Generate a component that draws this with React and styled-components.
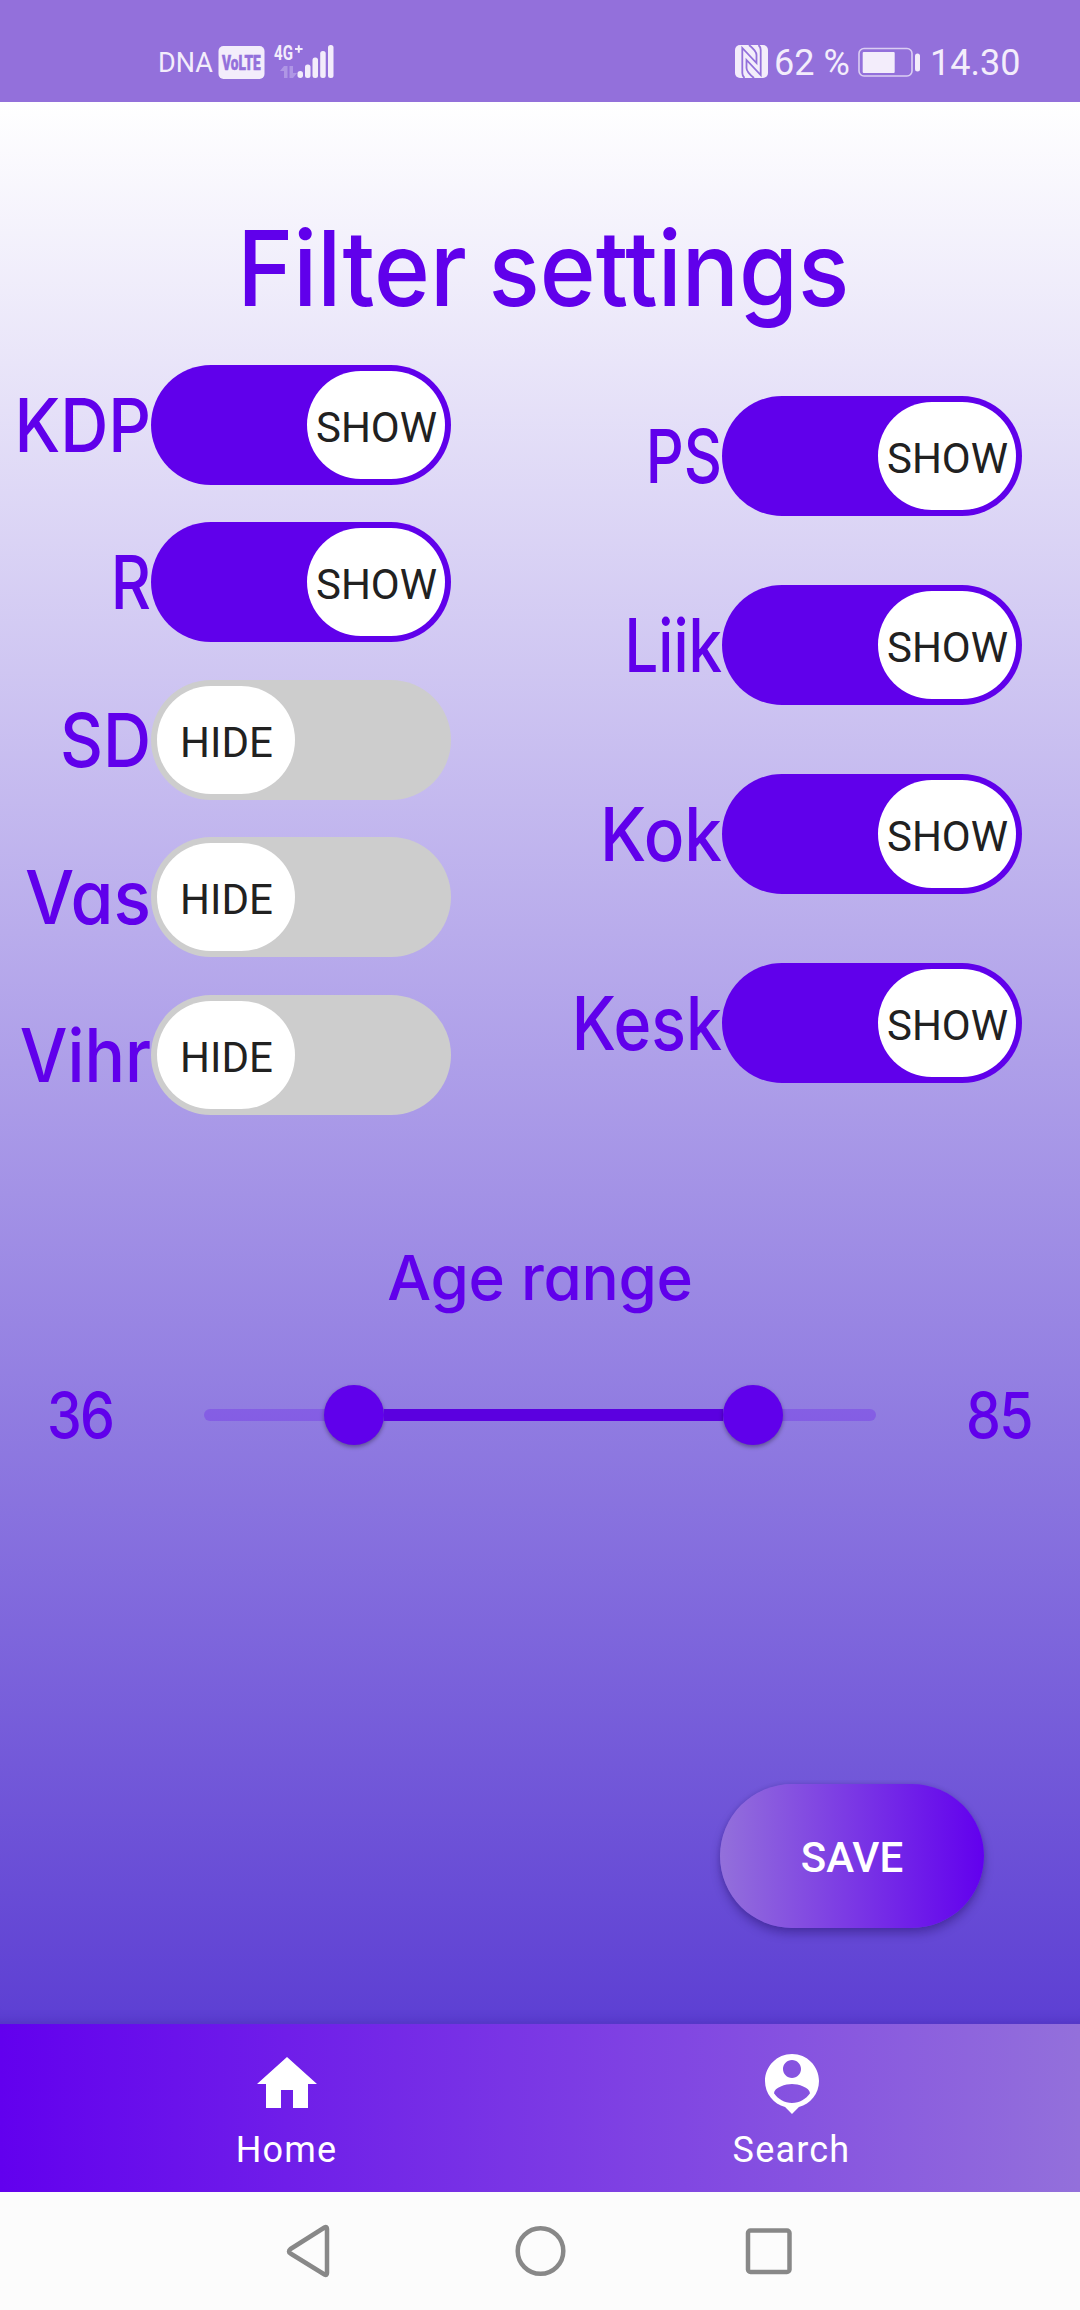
import React from 'react';
import styled, { createGlobalStyle } from 'styled-components';

const GlobalStyle = createGlobalStyle`
  * { box-sizing: border-box; }
  body { margin: 0; background: #fcfcfc; }
  button { border: 0; padding: 0; margin: 0; font: inherit; }
`;

const purple = '#6000eb';
const statusInk = '#f3edfb';

const Screen = styled.div`
  width: 1080px;
  height: 2310px;
  display: flex;
  flex-direction: column;
  overflow: hidden;
  font-family: Roboto, sans-serif;
`;

const StatusBar = styled.header`
  height: 102px;
  flex: none;
  display: flex;
  justify-content: space-between;
  padding: 45px 60px 0 158px;
  background: #9370db;
  color: ${statusInk};
`;

const StatusGroup = styled.div`
  display: flex;
  align-items: flex-start;
  height: 36px;
`;

const StatusText = styled.span`
  font-size: ${(p) => p.$size}px;
  line-height: 36px;
  white-space: nowrap;
  width: ${(p) => p.$width}px;
  margin-left: ${(p) => p.$gap || 0}px;
`;

const StatusSvg = styled.svg`
  display: block;
  flex: none;
  overflow: visible;
  margin-left: ${(p) => p.$gap || 0}px;
  margin-top: ${(p) => p.$drop || 0}px;
`;

const Content = styled.main`
  height: 1922px;
  flex: none;
  display: flex;
  flex-direction: column;
  background: linear-gradient(#ffffff, #5d3fd3);
  box-shadow: inset 0 -14px 12px -12px rgba(40, 20, 140, 0.25);
  color: ${purple};
  font-family: Inter, sans-serif;
  font-weight: 500;
  font-feature-settings: 'cv11' 1, 'calt' 0;
`;

const Title = styled.h1`
  margin: 101px 0 0;
  height: 130px;
  padding-left: 7px;
  text-align: center;
  font-size: 104px;
  font-weight: 500;
  line-height: 130px;
  word-spacing: -4px;
  white-space: nowrap;
  transform: scaleX(0.915);
`;

const Filters = styled.section`
  display: flex;
  justify-content: space-between;
  padding: 32px 58px 0 0;
  height: 782px;
`;

const FilterColumn = styled.div`
  display: flex;
  flex-direction: column;
  gap: ${(p) => p.$gap}px;
  padding-top: ${(p) => p.$top}px;
`;

const FilterRow = styled.label`
  display: flex;
  align-items: center;
  height: 120px;
`;

const FilterName = styled.span`
  width: ${(p) => p.$width}px;
  display: flex;
  justify-content: flex-end;
  font-size: 74px;
  line-height: 100px;
  white-space: nowrap;
  transform: scaleX(${(p) => p.$stretch});
  transform-origin: right center;
`;

const Toggle = styled.span`
  width: 300px;
  height: 120px;
  flex: none;
  display: flex;
  justify-content: ${(p) => (p.$on ? 'flex-end' : 'flex-start')};
  padding: 6px;
  border-radius: 60px;
  background: ${(p) => (p.$on ? purple : '#cdcdcd')};
`;

const Knob = styled.span`
  width: 138px;
  height: 108px;
  padding-left: 1px;
  border-radius: 54px;
  background: #fff;
  color: #212121;
  font-family: Roboto, sans-serif;
  font-size: 42px;
  font-weight: 400;
  line-height: 113px;
  text-align: center;
  white-space: nowrap;
`;

const AgeTitle = styled.h2`
  margin: 123px 0 0;
  height: 80px;
  text-align: center;
  font-size: 62px;
  font-weight: 500;
  line-height: 80px;
  letter-spacing: -0.3px;
`;

const AgeRow = styled.section`
  display: flex;
  align-items: center;
  justify-content: space-between;
  height: 80px;
  margin-top: 57px;
  padding: 0 47px;
`;

const AgeValue = styled.span`
  width: 67px;
  font-size: 63px;
  line-height: 80px;
  letter-spacing: -2px;
  white-space: nowrap;
  transform: scaleX(0.88);
  transform-origin: left center;
`;

const Track = styled.div`
  width: 672px;
  height: 12px;
  display: flex;
  align-items: center;
  border-radius: 6px;
  background: rgba(98, 0, 238, 0.24);
`;

const Thumb = styled.span`
  width: 60px;
  height: 60px;
  flex: none;
  border-radius: 50%;
  background: ${purple};
  box-shadow: 0 2px 4px rgba(0, 0, 0, 0.35);
`;

const Range = styled.span`
  height: 12px;
  background: #5b00e0;
`;

const SaveButton = styled.button`
  width: 264px;
  height: 144px;
  align-self: flex-end;
  margin: 329px 96px 0 0;
  border-radius: 72px;
  background: linear-gradient(90deg, #9370db, #6200ee);
  box-shadow: 0 6px 10px rgba(30, 10, 90, 0.35), 0 0 4px rgba(30, 10, 90, 0.15);
  color: #fff;
  font-family: Roboto, sans-serif;
  font-size: 42px;
  font-weight: 500;
  line-height: 148px;
  text-align: center;
`;

const TabBar = styled.nav`
  height: 168px;
  flex: none;
  display: flex;
  padding: 24px 36px 0 34px;
  background: linear-gradient(90deg, #6200ee, #9370db);
`;

const Tab = styled.div`
  flex: 1;
  display: flex;
  flex-direction: column;
  align-items: center;
  color: #fff;
  font-size: 36px;
  line-height: 42px;
  letter-spacing: 1.2px;
  gap: 9px;
`;

const SystemNav = styled.footer`
  height: 118px;
  flex: none;
  display: flex;
  align-items: flex-start;
  justify-content: space-between;
  padding: 30px 284px 0 279px;
  background: #fcfcfc;
`;

const leftParties = [
  { name: 'KDP', on: true, stretch: 0.9 },
  { name: 'R', on: true, stretch: 0.84 },
  { name: 'SD', on: false, stretch: 0.9 },
  { name: 'Vas', on: false, stretch: 0.94 },
  { name: 'Vihr', on: false, stretch: 0.91 },
];

const rightParties = [
  { name: 'PS', on: true, stretch: 0.8 },
  { name: 'Liik', on: true, stretch: 0.81 },
  { name: 'Kok', on: true, stretch: 0.91 },
  { name: 'Kesk', on: true, stretch: 0.87 },
];

const Party = ({ party, width }) => (
  <FilterRow>
    <FilterName $width={width} $stretch={party.stretch}>{party.name}</FilterName>
    <Toggle $on={party.on}>
      <Knob>{party.on ? 'SHOW' : 'HIDE'}</Knob>
    </Toggle>
  </FilterRow>
);

const Signal = () => (
  <StatusSvg $gap={5} width="116" height="34" viewBox="218 45 116 34" fill={statusInk}>
    <rect x="218.500" y="46" width="46" height="33" rx="5" />
    <text transform="translate(222 70) scale(.65 1)" fontFamily="Roboto" fontWeight="900" fontSize="21" stroke="#9370db" strokeWidth=".6" fill="#9370db">VoLTE</text>
    <text transform="translate(274 60) scale(.72 1)" fontFamily="Roboto" fontWeight="700" fontSize="21">4G</text>
    <path d="M295 48h2.800v-2.800h2V48h2.800v2h-2.800v2.800h-2V50H295z" />
    <path opacity=".3" d="M284 66h3.500v12h-3.500v-7h-4zM289.500 66h3.500v7h4l-4 5h-3.500z" />
    <rect x="297.500" y="71" width="5.500" height="7" rx="2.700" />
    <rect x="305" y="64.500" width="5.500" height="13.500" rx="2.500" />
    <rect x="312.500" y="57.500" width="5.500" height="20.500" rx="2.500" />
    <rect x="320.200" y="51" width="5.500" height="27" rx="2.500" />
    <rect x="328" y="45" width="5.500" height="33" rx="2.500" />
  </StatusSvg>
);

const Nfc = () => (
  <StatusSvg width="33" height="33" viewBox="0 0 33 33">
    <rect width="33" height="33" rx="5" fill={statusInk} />
    <g fill="none" stroke="#9370db" strokeWidth="1.800">
      <path d="M9.500 33Q7.300 31 7.300 28V3L21.500 18V10Q21.500 6 14 0" />
      <path d="M23.500 0Q25.700 2 25.700 5V30L11.500 15V23Q11.500 27 19 33" />
    </g>
  </StatusSvg>
);

const Battery = () => (
  <StatusSvg $drop={2} width="63" height="30" viewBox="0 0 63 30">
    <rect x="1" y="1.500" width="53" height="27.500" rx="5" fill="none" stroke={statusInk} strokeOpacity=".75" strokeWidth="1.600" />
    <rect x="4.700" y="5" width="32" height="21" rx="1" fill={statusInk} />
    <rect x="57" y="6.500" width="5" height="18" rx="2.500" fill={statusInk} />
  </StatusSvg>
);

const HomeIcon = () => (
  <svg width="72" height="72" viewBox="0 0 24 24" fill="currentColor">
    <path d="M10 20v-6h4v6h5v-8h3L12 3 2 12h3v8z" />
  </svg>
);

const PersonPinIcon = () => (
  <svg width="72" height="72" viewBox="0 0 24 24" fill="currentColor">
    <path d="M12 2c-4.970 0-9 4.030-9 9 0 4.170 2.840 7.670 6.690 8.690L12 22l2.310-2.310C18.160 18.670 21 15.170 21 11c0-4.970-4.030-9-9-9zm0 2c1.660 0 3 1.340 3 3s-1.340 3-3 3-3-1.340-3-3 1.340-3 3-3zm0 14.300c-2.500 0-4.710-1.280-6-3.220.03-1.990 4-3.080 6-3.080 1.990 0 5.970 1.090 6 3.080-1.290 1.940-3.500 3.220-6 3.220z" />
  </svg>
);

export default function App() {
  return (
    <Screen>
      <GlobalStyle />
      <StatusBar>
        <StatusGroup>
          <StatusText $size={27} $width={55}>DNA</StatusText>
          <Signal />
        </StatusGroup>
        <StatusGroup>
          <Nfc />
          <StatusText $size={36} $width={84} $gap={6}>62 %</StatusText>
          <Battery />
          <StatusText $size={36} $width={90} $gap={9}>14.30</StatusText>
        </StatusGroup>
      </StatusBar>
      <Content>
        <Title>Filter settings</Title>
        <Filters>
          <FilterColumn $gap={37.4} $top={0}>
            {leftParties.map((p) => <Party key={p.name} party={p} width={151} />)}
          </FilterColumn>
          <FilterColumn $gap={69} $top={31}>
            {rightParties.map((p) => <Party key={p.name} party={p} width={200} />)}
          </FilterColumn>
        </Filters>
        <AgeTitle>Age range</AgeTitle>
        <AgeRow>
          <AgeValue>36</AgeValue>
          <Track>
            <Thumb style={{ marginLeft: 120 }} />
            <Range style={{ width: 339 }} />
            <Thumb />
          </Track>
          <AgeValue>85</AgeValue>
        </AgeRow>
        <SaveButton>SAVE</SaveButton>
      </Content>
      <TabBar>
        <Tab><HomeIcon /><span>Home</span></Tab>
        <Tab><PersonPinIcon /><span>Search</span></Tab>
      </TabBar>
      <SystemNav>
        <svg width="60" height="60" viewBox="0 0 60 60" fill="none" stroke="#888" strokeWidth="4.500" strokeLinejoin="round">
          <path d="M48 7v44q0 3-2.500 1.500L11.500 31.500q-3-2 0-4.500L45.500 5.500Q48 4 48 7z" />
        </svg>
        <svg width="60" height="60" viewBox="-2.500 0 60 60" fill="none" stroke="#888" strokeWidth="4.500">
          <circle cx="30" cy="29" r="22.800" />
        </svg>
        <svg width="60" height="60" viewBox="0 0 60 60" fill="none" stroke="#888" strokeWidth="4.500">
          <rect x="12" y="8.500" width="41.500" height="41.500" rx="2.500" />
        </svg>
      </SystemNav>
    </Screen>
  );
}
